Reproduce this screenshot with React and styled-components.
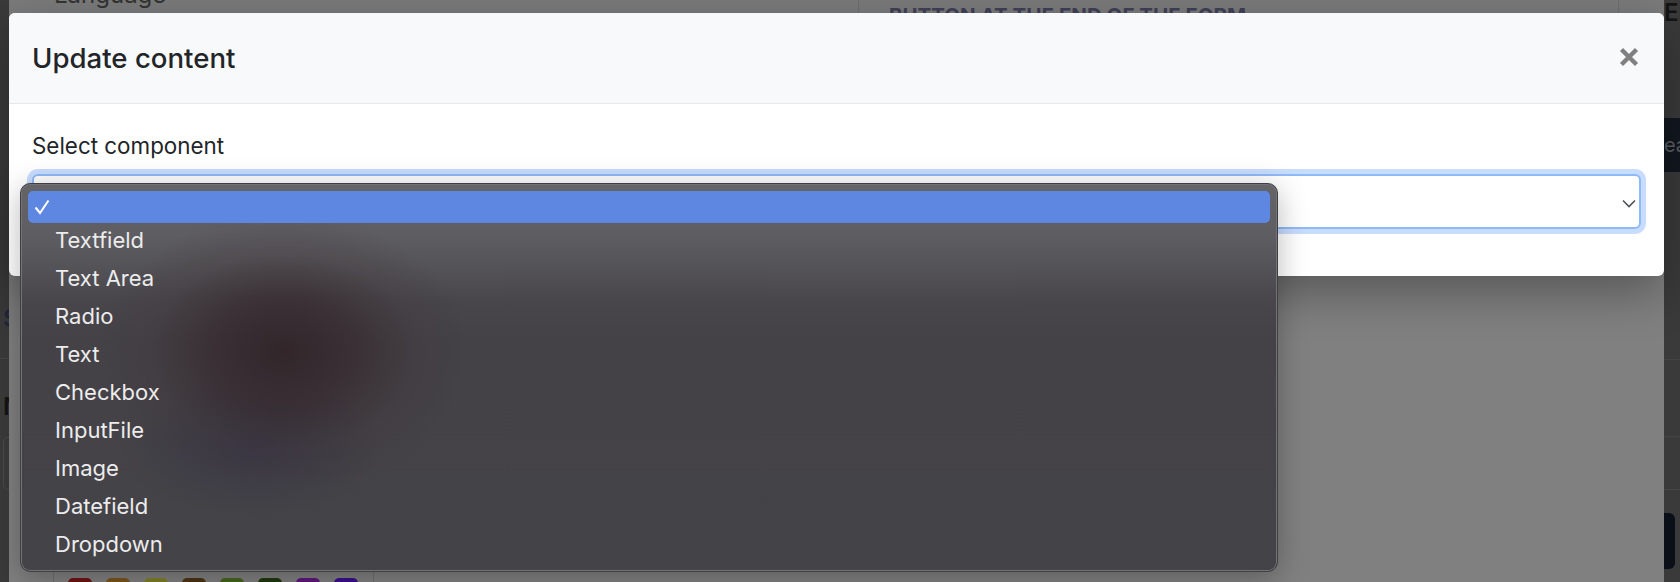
import React from "react";
import styled, { createGlobalStyle } from "styled-components";

const Global = createGlobalStyle`
  html, body { margin: 0; padding: 0; background: #808080; }
  body { font-family: Inter, "Liberation Sans", sans-serif; color: #212529; -webkit-font-smoothing: antialiased; }
`;

const Stage = styled.div`
  display: flex;
  width: 1680px;
  height: 582px;
  overflow: hidden;
`;

const SideStrip = styled.aside`
  flex: none;
  width: ${(p) => p.$width}px;
  height: 582px;
  background: #3a3a3a;
  overflow: hidden;
  display: flex;
  flex-direction: column;
`;

const StripLetter = styled.div`
  height: ${(p) => p.$height}px;
  margin-top: ${(p) => p.$top}px;
  padding-left: ${(p) => p.$left || 0}px;
  font-size: 24px;
  line-height: ${(p) => p.$height}px;
  font-weight: 600;
  color: ${(p) => p.$color};
  white-space: nowrap;
  flex: none;
`;

const StripRule = styled.div`
  flex: none;
  height: 1px;
  margin-top: ${(p) => p.$top}px;
  background: #444;
`;

const GhostInput = styled.div`
  flex: none;
  width: 20px;
  height: 51px;
  margin: ${(p) => p.$top}px 0 0 3px;
  border: 1px solid #4a4a4a;
  border-radius: 5px;
`;

const NavyBand = styled.div`
  flex: none;
  height: 54px;
  margin-top: ${(p) => p.$top}px;
  background: #12171f;
  color: #5c5f63;
  font-size: 20px;
  line-height: 54px;
  white-space: nowrap;
`;

const NavyButton = styled.div`
  flex: none;
  width: 11px;
  height: 56px;
  margin-top: ${(p) => p.$top}px;
  background: #0a0f18;
  border-radius: 0 6px 6px 0;
`;

const Middle = styled.main`
  position: relative;
  flex: 1;
  min-width: 0;
  height: 582px;
  background: #808080;
  display: flex;
  flex-direction: column;
  justify-content: space-between;
`;

const PageTop = styled.div`
  display: flex;
  height: 16px;
  overflow: hidden;
  background: #7b7b7b;
`;

const PageLabel = styled.div`
  width: 849px;
  flex: none;
  padding-left: 45px;
  box-sizing: border-box;
  margin-top: -19px;
  font-size: 24px;
  line-height: 28px;
  color: #333;
`;

const PagePanel = styled.div`
  flex: none;
  width: 761px;
  box-sizing: border-box;
  padding: 4px 0 0 30px;
  border-left: 1px solid #6f6f6f;
  border-right: 1px solid #6f6f6f;
  font-size: 20.5px;
  font-weight: 700;
  line-height: 24px;
  color: #3f4058;
  white-space: nowrap;
`;

const SwatchPanel = styled.div`
  display: flex;
  gap: 14px;
  width: 321px;
  height: 12px;
  box-sizing: border-box;
  margin-left: 44px;
  padding: 8px 0 0 14px;
  border-left: 1px solid #6f6f6f;
  border-right: 1px solid #6f6f6f;
  overflow: hidden;
`;

const Swatch = styled.span`
  flex: none;
  width: 24px;
  height: 24px;
  border-radius: 5px;
  background: ${(p) => p.$color};
`;

const Modal = styled.section`
  position: absolute;
  top: 13px;
  left: 0;
  width: 1655px;
  height: 263px;
  background: #fff;
  border-radius: 6px;
  box-shadow: 0 16px 48px rgba(0, 0, 0, 0.32);
  display: flex;
  flex-direction: column;
`;

const ModalHeader = styled.header`
  flex: none;
  height: 91px;
  box-sizing: border-box;
  padding: 0 24px 0 23px;
  background: #f8f9fa;
  border-bottom: 1.5px solid #e7e8ea;
  border-radius: 6px 6px 0 0;
  display: flex;
  align-items: center;
  justify-content: space-between;
`;

const Title = styled.h5`
  margin: 0;
  font-size: 27.6px;
  font-weight: 500;
  line-height: 33px;
  color: #212529;
`;

const CloseButton = styled.button`
  appearance: none;
  border: 0;
  background: none;
  padding: 0;
  width: 22px;
  height: 22px;
  margin: 0 0 2px;
  display: flex;
`;

const ModalBody = styled.div`
  padding: 25px 23px 0;
  display: flex;
  flex-direction: column;
`;

const FieldLabel = styled.label`
  font-size: 22.4px;
  line-height: 34px;
  color: #212529;
`;

const SelectBox = styled.div`
  margin-top: 11px;
  height: 55px;
  box-sizing: border-box;
  border: 2px solid #8fbaf8;
  border-radius: 6px;
  box-shadow: 0 0 0 5px #c8dcfe;
  background: #fff;
  display: flex;
  align-items: center;
  justify-content: flex-end;
  padding: 2px 2px 0 0;
`;

const Menu = styled.div`
  position: absolute;
  top: 183px;
  left: 11px;
  width: 1258px;
  height: 389px;
  box-sizing: border-box;
  padding: 7px;
  border-radius: 10px;
  border: 1px solid #3f3e42;
  box-shadow: inset 0 0 0 1px #737277, 0 6px 30px rgba(0, 0, 0, 0.28);
  background:
    radial-gradient(ellipse 185px 140px at 262px 168px, rgba(46, 32, 36, 0.82) 0, rgba(50, 35, 40, 0.62) 35%, rgba(60, 45, 50, 0.22) 70%, rgba(60, 45, 50, 0) 100%),
    radial-gradient(ellipse 130px 70px at 232px 262px, rgba(48, 46, 68, 0.5), rgba(48, 46, 68, 0) 100%),
    linear-gradient(180deg, #656468 0, #5e5d62 50px, #565559 77px, #48464b 117px, #444247 157px, #444347 100%);
  display: flex;
  flex-direction: column;
`;

const MenuItem = styled.div`
  flex: none;
  height: ${(p) => (p.$selected ? 32 : 38)}px;
  margin-bottom: ${(p) => (p.$selected ? -2 : 0)}px;
  box-sizing: border-box;
  padding-left: ${(p) => (p.$selected ? 6 : 27)}px;
  border-radius: 5px;
  background: ${(p) => (p.$selected ? "#5e87e1" : "transparent")};
  color: #ececed;
  font-size: 22px;
  line-height: 38px;
  display: flex;
  align-items: center;
`;

const items = ["Textfield", "Text Area", "Radio", "Text", "Checkbox", "InputFile", "Image", "Datefield", "Dropdown"];
const swatches = ["#701313", "#7c541c", "#808028", "#4d3416", "#45661c", "#1f3a0e", "#60187d", "#3b0f8e"];

export default function App() {
  return (
    <>
      <Global />
      <Stage>
        <SideStrip $width={9}>
          <StripLetter $top={310} $height={17} $left={3} $color="#23263a">S</StripLetter>
          <StripRule $top={31} />
          <StripLetter $top={39} $height={17} $left={3} $color="#141414">N</StripLetter>
          <GhostInput $top={22} />
        </SideStrip>
        <Middle>
          <PageTop>
            <PageLabel>Language</PageLabel>
            <PagePanel>BUTTON AT THE END OF THE FORM</PagePanel>
          </PageTop>
          <SwatchPanel>
            {swatches.map((c) => (
              <Swatch key={c} $color={c} />
            ))}
          </SwatchPanel>
          <Modal>
            <ModalHeader>
              <Title>Update content</Title>
              <CloseButton aria-label="Close">
                <svg width="22" height="22" viewBox="0 0 22 22">
                  <path d="M3.5 3.5 18.5 18.5M18.5 3.5 3.5 18.5" stroke="#808080" strokeWidth="4.4" fill="none" />
                </svg>
              </CloseButton>
            </ModalHeader>
            <ModalBody>
              <FieldLabel>Select component</FieldLabel>
              <SelectBox>
                <svg width="16" height="16" viewBox="0 0 16 16">
                  <path d="M2 5.5 8 11.5 14 5.5" stroke="#4f5255" strokeWidth="1.6" fill="none" />
                </svg>
              </SelectBox>
            </ModalBody>
          </Modal>
          <Menu>
            <MenuItem $selected>
              <svg width="16" height="16" viewBox="0 0 16 16">
                <path d="M1.5 8.5 6 14 14.5 1.5" stroke="#fff" strokeWidth="2" fill="none" />
              </svg>
            </MenuItem>
            {items.map((t) => (
              <MenuItem key={t}>{t}</MenuItem>
            ))}
          </Menu>
        </Middle>
        <SideStrip $width={16}>
          <StripLetter $top={2} $height={22} $color="#141414">EN</StripLetter>
          <NavyBand $top={94}>ea</NavyBand>
          <StripRule $top={187} />
          <StripRule $top={76} />
          <StripRule $top={52} />
          <NavyButton $top={23} />
        </SideStrip>
      </Stage>
    </>
  );
}
